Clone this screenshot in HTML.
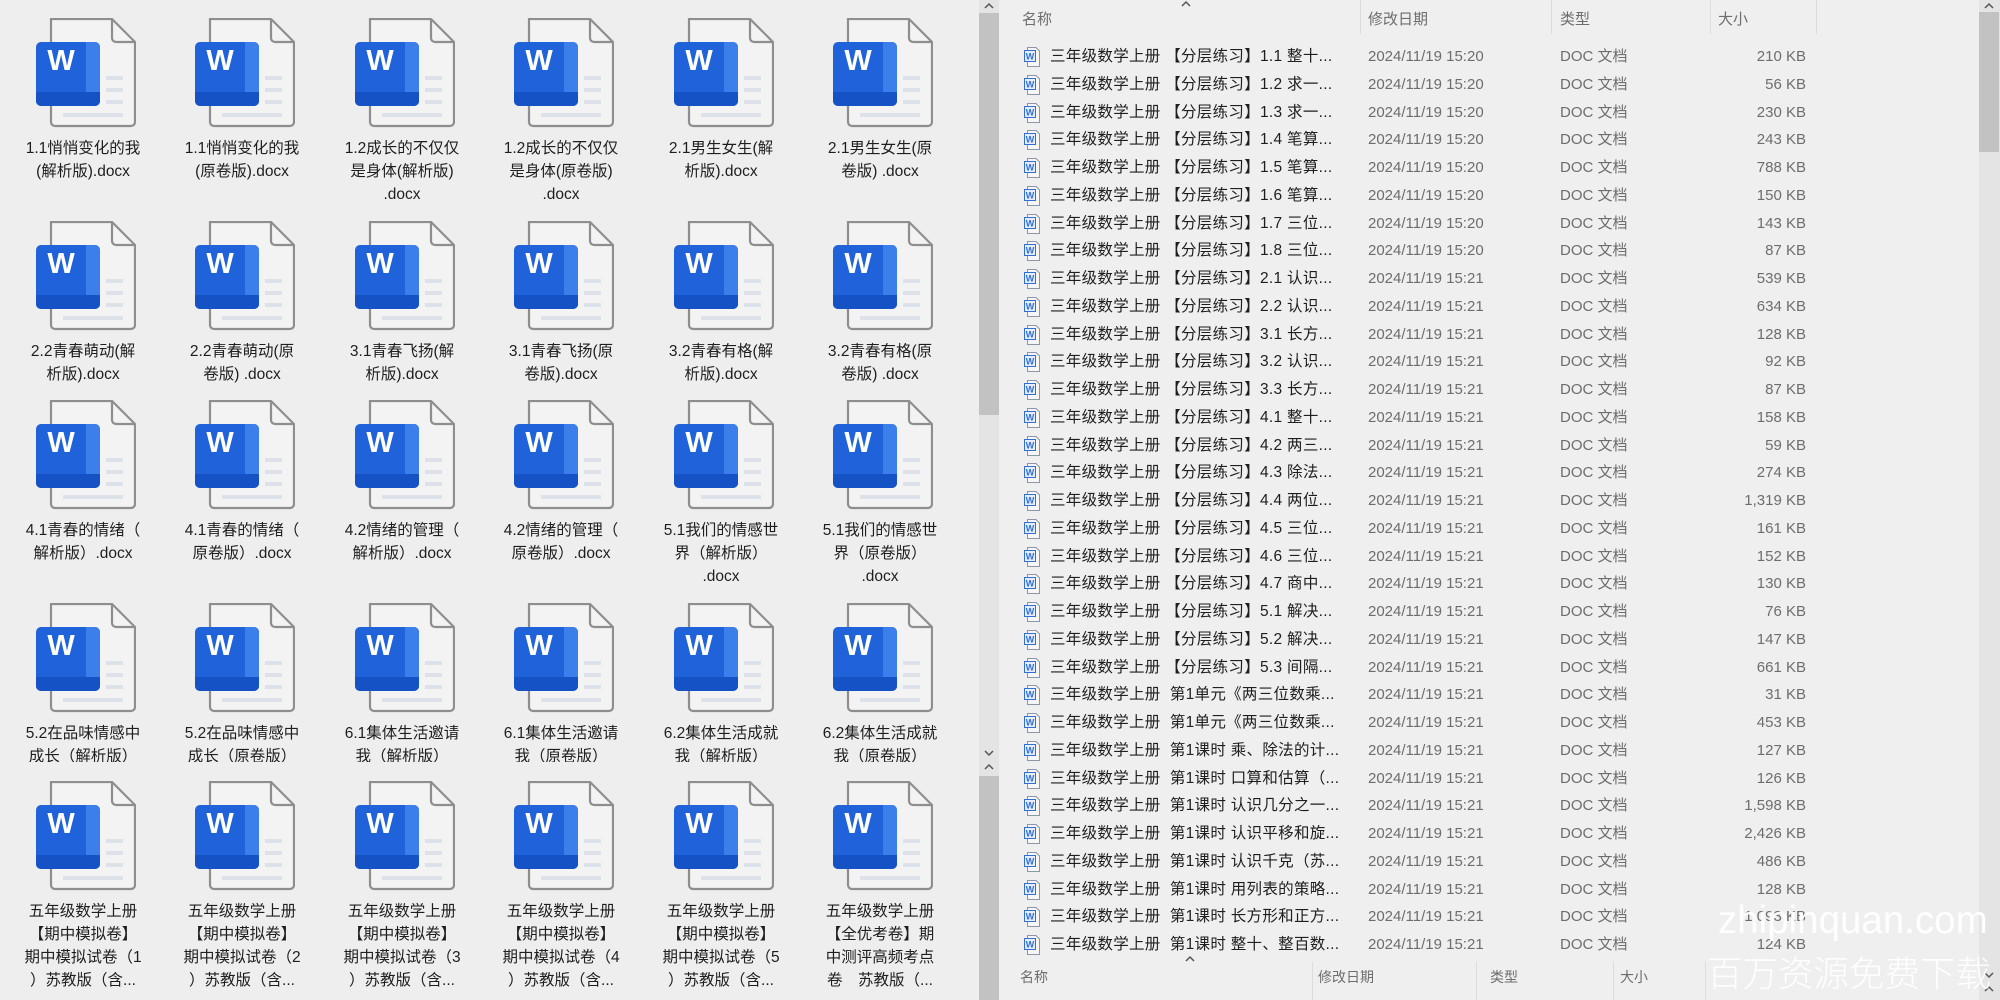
<!DOCTYPE html>
<html><head><meta charset="utf-8">
<style>
*{margin:0;padding:0;box-sizing:border-box}
body{width:2000px;height:1000px;overflow:hidden;background:#eeeeee;font-family:"Liberation Sans","Noto Sans CJK SC",sans-serif;position:relative}
.ic{position:absolute;width:100px;height:110px}
.lb{position:absolute;width:160px;text-align:center;font-size:15.5px;line-height:23px;color:#1e1e1e;white-space:nowrap;overflow:hidden}
.sb{position:absolute;background:#e4e4e4}
.th{position:absolute;background:#c2c2c2}
.cv{position:absolute;width:20px;height:10px}
#rp{position:absolute;left:1000px;top:0;width:979px;height:1000px;background:#efefef}
.hd{position:absolute;top:8px;font-size:15px;color:#6d6d6d}
.sep{position:absolute;width:1px;background:#dcdcdc}
.row{position:absolute;left:0;height:28px;width:830px;font-size:15px;line-height:28px}
.row svg{position:absolute;left:24px;top:4px}
.n{position:absolute;left:50px;color:#1e1e1e;white-space:nowrap;font-size:15.5px;letter-spacing:0.3px}
.d{position:absolute;left:368px;color:#6d6d6d}
.t{position:absolute;left:560px;color:#6d6d6d}
.s{position:absolute;right:24px;color:#6d6d6d}
.wm{position:absolute;color:#fff;opacity:.95;white-space:nowrap}
</style></head><body>
<svg width="0" height="0" style="position:absolute">
<defs>
<g id="doc">
<path d="M15 1H76L99 24V104a4 4 0 0 1-4 4H19a4 4 0 0 1-4-4Z" fill="#f3f3f3" stroke="#8e8e8e" stroke-width="2.2"/>
<path d="M76 1V20a4 4 0 0 0 4 4H99" fill="none" stroke="#8e8e8e" stroke-width="2.2"/>
<rect x="70" y="58" width="17" height="4" fill="#dde2ea"/>
<rect x="70" y="70" width="17" height="4" fill="#dde2ea"/>
<rect x="70" y="82" width="17" height="4" fill="#dde2ea"/>
<rect x="27" y="95" width="60" height="4" fill="#dde2ea"/>
<rect x="0" y="24" width="64" height="64" rx="5" fill="#1f62d9"/>
<path d="M50 24h9a5 5 0 0 1 5 5v54a5 5 0 0 1-5 5h-9Z" fill="#3c7eea"/>
<path d="M0 74h64v9a5 5 0 0 1-5 5H5a5 5 0 0 1-5-5Z" fill="#1552c6"/>
<text x="25" y="52" font-family="Liberation Sans" font-weight="bold" font-size="29" fill="#fff" text-anchor="middle">W</text>
</g>
<g id="sd">
<path d="M3.5 .5H12L15.5 4V19.5H3.5Z" fill="#f6f6f6" stroke="#8c96a8"/>
<rect x=".5" y="3.5" width="11" height="11" fill="#e6eefb" stroke="#2f6fd6" stroke-width="1"/>
<text x="6" y="12.5" font-family="Liberation Sans" font-size="9" font-weight="bold" fill="#2f6fd6" text-anchor="middle">W</text>
</g>
<path id="up" d="M6 7L10 3L14 7" fill="none" stroke="#555" stroke-width="1.5"/>
<path id="dn" d="M6 3L10 7L14 3" fill="none" stroke="#555" stroke-width="1.5"/>
</defs></svg>

<svg class="ic" style="left:36px;top:18px" viewBox="0 0 100 110"><use href="#doc"/></svg>
<svg class="ic" style="left:195px;top:18px" viewBox="0 0 100 110"><use href="#doc"/></svg>
<svg class="ic" style="left:355px;top:18px" viewBox="0 0 100 110"><use href="#doc"/></svg>
<svg class="ic" style="left:514px;top:18px" viewBox="0 0 100 110"><use href="#doc"/></svg>
<svg class="ic" style="left:674px;top:18px" viewBox="0 0 100 110"><use href="#doc"/></svg>
<svg class="ic" style="left:833px;top:18px" viewBox="0 0 100 110"><use href="#doc"/></svg>

<svg class="ic" style="left:36px;top:221px" viewBox="0 0 100 110"><use href="#doc"/></svg>
<svg class="ic" style="left:195px;top:221px" viewBox="0 0 100 110"><use href="#doc"/></svg>
<svg class="ic" style="left:355px;top:221px" viewBox="0 0 100 110"><use href="#doc"/></svg>
<svg class="ic" style="left:514px;top:221px" viewBox="0 0 100 110"><use href="#doc"/></svg>
<svg class="ic" style="left:674px;top:221px" viewBox="0 0 100 110"><use href="#doc"/></svg>
<svg class="ic" style="left:833px;top:221px" viewBox="0 0 100 110"><use href="#doc"/></svg>

<svg class="ic" style="left:36px;top:400px" viewBox="0 0 100 110"><use href="#doc"/></svg>
<svg class="ic" style="left:195px;top:400px" viewBox="0 0 100 110"><use href="#doc"/></svg>
<svg class="ic" style="left:355px;top:400px" viewBox="0 0 100 110"><use href="#doc"/></svg>
<svg class="ic" style="left:514px;top:400px" viewBox="0 0 100 110"><use href="#doc"/></svg>
<svg class="ic" style="left:674px;top:400px" viewBox="0 0 100 110"><use href="#doc"/></svg>
<svg class="ic" style="left:833px;top:400px" viewBox="0 0 100 110"><use href="#doc"/></svg>

<svg class="ic" style="left:36px;top:603px" viewBox="0 0 100 110"><use href="#doc"/></svg>
<svg class="ic" style="left:195px;top:603px" viewBox="0 0 100 110"><use href="#doc"/></svg>
<svg class="ic" style="left:355px;top:603px" viewBox="0 0 100 110"><use href="#doc"/></svg>
<svg class="ic" style="left:514px;top:603px" viewBox="0 0 100 110"><use href="#doc"/></svg>
<svg class="ic" style="left:674px;top:603px" viewBox="0 0 100 110"><use href="#doc"/></svg>
<svg class="ic" style="left:833px;top:603px" viewBox="0 0 100 110"><use href="#doc"/></svg>

<svg class="ic" style="left:36px;top:781px" viewBox="0 0 100 110"><use href="#doc"/></svg>
<svg class="ic" style="left:195px;top:781px" viewBox="0 0 100 110"><use href="#doc"/></svg>
<svg class="ic" style="left:355px;top:781px" viewBox="0 0 100 110"><use href="#doc"/></svg>
<svg class="ic" style="left:514px;top:781px" viewBox="0 0 100 110"><use href="#doc"/></svg>
<svg class="ic" style="left:674px;top:781px" viewBox="0 0 100 110"><use href="#doc"/></svg>
<svg class="ic" style="left:833px;top:781px" viewBox="0 0 100 110"><use href="#doc"/></svg>

<div class="lb" style="left:3px;top:137px">1.1悄悄变化的我<br>(解析版).docx</div>
<div class="lb" style="left:162px;top:137px">1.1悄悄变化的我<br>(原卷版).docx</div>
<div class="lb" style="left:322px;top:137px">1.2成长的不仅仅<br>是身体(解析版)<br>.docx</div>
<div class="lb" style="left:481px;top:137px">1.2成长的不仅仅<br>是身体(原卷版)<br>.docx</div>
<div class="lb" style="left:641px;top:137px">2.1男生女生(解<br>析版).docx</div>
<div class="lb" style="left:800px;top:137px">2.1男生女生(原<br>卷版) .docx</div>

<div class="lb" style="left:3px;top:340px">2.2青春萌动(解<br>析版).docx</div>
<div class="lb" style="left:162px;top:340px">2.2青春萌动(原<br>卷版) .docx</div>
<div class="lb" style="left:322px;top:340px">3.1青春飞扬(解<br>析版).docx</div>
<div class="lb" style="left:481px;top:340px">3.1青春飞扬(原<br>卷版).docx</div>
<div class="lb" style="left:641px;top:340px">3.2青春有格(解<br>析版).docx</div>
<div class="lb" style="left:800px;top:340px">3.2青春有格(原<br>卷版) .docx</div>

<div class="lb" style="left:3px;top:519px">4.1青春的情绪（<br>解析版）.docx</div>
<div class="lb" style="left:162px;top:519px">4.1青春的情绪（<br>原卷版）.docx</div>
<div class="lb" style="left:322px;top:519px">4.2情绪的管理（<br>解析版）.docx</div>
<div class="lb" style="left:481px;top:519px">4.2情绪的管理（<br>原卷版）.docx</div>
<div class="lb" style="left:641px;top:519px">5.1我们的情感世<br>界（解析版）<br>.docx</div>
<div class="lb" style="left:800px;top:519px">5.1我们的情感世<br>界（原卷版）<br>.docx</div>

<div class="lb" style="left:3px;top:722px;height:40px">5.2在品味情感中<br>成长（解析版）</div>
<div class="lb" style="left:162px;top:722px;height:40px">5.2在品味情感中<br>成长（原卷版）</div>
<div class="lb" style="left:322px;top:722px;height:40px">6.1集体生活邀请<br>我（解析版）</div>
<div class="lb" style="left:481px;top:722px;height:40px">6.1集体生活邀请<br>我（原卷版）</div>
<div class="lb" style="left:641px;top:722px;height:40px">6.2集体生活成就<br>我（解析版）</div>
<div class="lb" style="left:800px;top:722px;height:40px">6.2集体生活成就<br>我（原卷版）</div>

<div class="lb" style="left:3px;top:900px">五年级数学上册<br>【期中模拟卷】<br>期中模拟试卷（1<br>）苏教版（含...</div>
<div class="lb" style="left:162px;top:900px">五年级数学上册<br>【期中模拟卷】<br>期中模拟试卷（2<br>）苏教版（含...</div>
<div class="lb" style="left:322px;top:900px">五年级数学上册<br>【期中模拟卷】<br>期中模拟试卷（3<br>）苏教版（含...</div>
<div class="lb" style="left:481px;top:900px">五年级数学上册<br>【期中模拟卷】<br>期中模拟试卷（4<br>）苏教版（含...</div>
<div class="lb" style="left:641px;top:900px">五年级数学上册<br>【期中模拟卷】<br>期中模拟试卷（5<br>）苏教版（含...</div>
<div class="lb" style="left:800px;top:900px">五年级数学上册<br>【全优考卷】期<br>中测评高频考点<br>卷　苏教版（...</div>

<div class="sb" style="left:979px;top:0;width:20px;height:1000px"></div>
<div class="th" style="left:979px;top:13px;width:20px;height:402px"></div>
<div class="th" style="left:979px;top:776px;width:20px;height:224px"></div>
<svg class="cv" style="left:979px;top:1px"><use href="#up"/></svg>
<svg class="cv" style="left:979px;top:748px"><use href="#dn"/></svg>
<svg class="cv" style="left:979px;top:762px"><use href="#up"/></svg>

<div id="rp">
<div class="hd" style="left:22px">名称</div>
<svg class="cv" style="left:176px;top:-1px"><use href="#up"/></svg>
<div class="hd" style="left:368px">修改日期</div>
<div class="hd" style="left:560px">类型</div>
<div class="hd" style="left:718px">大小</div>
<div class="sep" style="left:360px;top:0;height:34px"></div>
<div class="sep" style="left:551px;top:0;height:34px"></div>
<div class="sep" style="left:710px;top:0;height:34px"></div>
<div class="sep" style="left:816px;top:0;height:34px"></div>

<div class="row" style="top:43px"><svg width="16" height="20"><use href="#sd"/></svg><span class="n">三年级数学上册 【分层练习】1.1 整十...</span><span class="d">2024/11/19 15:20</span><span class="t">DOC 文档</span><span class="s">210 KB</span></div>
<div class="row" style="top:70.75px"><svg width="16" height="20"><use href="#sd"/></svg><span class="n">三年级数学上册 【分层练习】1.2 求一...</span><span class="d">2024/11/19 15:20</span><span class="t">DOC 文档</span><span class="s">56 KB</span></div>
<div class="row" style="top:98.5px"><svg width="16" height="20"><use href="#sd"/></svg><span class="n">三年级数学上册 【分层练习】1.3 求一...</span><span class="d">2024/11/19 15:20</span><span class="t">DOC 文档</span><span class="s">230 KB</span></div>
<div class="row" style="top:126.25px"><svg width="16" height="20"><use href="#sd"/></svg><span class="n">三年级数学上册 【分层练习】1.4 笔算...</span><span class="d">2024/11/19 15:20</span><span class="t">DOC 文档</span><span class="s">243 KB</span></div>
<div class="row" style="top:154px"><svg width="16" height="20"><use href="#sd"/></svg><span class="n">三年级数学上册 【分层练习】1.5 笔算...</span><span class="d">2024/11/19 15:20</span><span class="t">DOC 文档</span><span class="s">788 KB</span></div>
<div class="row" style="top:181.75px"><svg width="16" height="20"><use href="#sd"/></svg><span class="n">三年级数学上册 【分层练习】1.6 笔算...</span><span class="d">2024/11/19 15:20</span><span class="t">DOC 文档</span><span class="s">150 KB</span></div>
<div class="row" style="top:209.5px"><svg width="16" height="20"><use href="#sd"/></svg><span class="n">三年级数学上册 【分层练习】1.7 三位...</span><span class="d">2024/11/19 15:20</span><span class="t">DOC 文档</span><span class="s">143 KB</span></div>
<div class="row" style="top:237.25px"><svg width="16" height="20"><use href="#sd"/></svg><span class="n">三年级数学上册 【分层练习】1.8 三位...</span><span class="d">2024/11/19 15:20</span><span class="t">DOC 文档</span><span class="s">87 KB</span></div>
<div class="row" style="top:265px"><svg width="16" height="20"><use href="#sd"/></svg><span class="n">三年级数学上册 【分层练习】2.1 认识...</span><span class="d">2024/11/19 15:21</span><span class="t">DOC 文档</span><span class="s">539 KB</span></div>
<div class="row" style="top:292.75px"><svg width="16" height="20"><use href="#sd"/></svg><span class="n">三年级数学上册 【分层练习】2.2 认识...</span><span class="d">2024/11/19 15:21</span><span class="t">DOC 文档</span><span class="s">634 KB</span></div>
<div class="row" style="top:320.5px"><svg width="16" height="20"><use href="#sd"/></svg><span class="n">三年级数学上册 【分层练习】3.1 长方...</span><span class="d">2024/11/19 15:21</span><span class="t">DOC 文档</span><span class="s">128 KB</span></div>
<div class="row" style="top:348.25px"><svg width="16" height="20"><use href="#sd"/></svg><span class="n">三年级数学上册 【分层练习】3.2 认识...</span><span class="d">2024/11/19 15:21</span><span class="t">DOC 文档</span><span class="s">92 KB</span></div>
<div class="row" style="top:376px"><svg width="16" height="20"><use href="#sd"/></svg><span class="n">三年级数学上册 【分层练习】3.3 长方...</span><span class="d">2024/11/19 15:21</span><span class="t">DOC 文档</span><span class="s">87 KB</span></div>
<div class="row" style="top:403.75px"><svg width="16" height="20"><use href="#sd"/></svg><span class="n">三年级数学上册 【分层练习】4.1 整十...</span><span class="d">2024/11/19 15:21</span><span class="t">DOC 文档</span><span class="s">158 KB</span></div>
<div class="row" style="top:431.5px"><svg width="16" height="20"><use href="#sd"/></svg><span class="n">三年级数学上册 【分层练习】4.2 两三...</span><span class="d">2024/11/19 15:21</span><span class="t">DOC 文档</span><span class="s">59 KB</span></div>
<div class="row" style="top:459.25px"><svg width="16" height="20"><use href="#sd"/></svg><span class="n">三年级数学上册 【分层练习】4.3 除法...</span><span class="d">2024/11/19 15:21</span><span class="t">DOC 文档</span><span class="s">274 KB</span></div>
<div class="row" style="top:487px"><svg width="16" height="20"><use href="#sd"/></svg><span class="n">三年级数学上册 【分层练习】4.4 两位...</span><span class="d">2024/11/19 15:21</span><span class="t">DOC 文档</span><span class="s">1,319 KB</span></div>
<div class="row" style="top:514.75px"><svg width="16" height="20"><use href="#sd"/></svg><span class="n">三年级数学上册 【分层练习】4.5 三位...</span><span class="d">2024/11/19 15:21</span><span class="t">DOC 文档</span><span class="s">161 KB</span></div>
<div class="row" style="top:542.5px"><svg width="16" height="20"><use href="#sd"/></svg><span class="n">三年级数学上册 【分层练习】4.6 三位...</span><span class="d">2024/11/19 15:21</span><span class="t">DOC 文档</span><span class="s">152 KB</span></div>
<div class="row" style="top:570.25px"><svg width="16" height="20"><use href="#sd"/></svg><span class="n">三年级数学上册 【分层练习】4.7 商中...</span><span class="d">2024/11/19 15:21</span><span class="t">DOC 文档</span><span class="s">130 KB</span></div>
<div class="row" style="top:598px"><svg width="16" height="20"><use href="#sd"/></svg><span class="n">三年级数学上册 【分层练习】5.1 解决...</span><span class="d">2024/11/19 15:21</span><span class="t">DOC 文档</span><span class="s">76 KB</span></div>
<div class="row" style="top:625.75px"><svg width="16" height="20"><use href="#sd"/></svg><span class="n">三年级数学上册 【分层练习】5.2 解决...</span><span class="d">2024/11/19 15:21</span><span class="t">DOC 文档</span><span class="s">147 KB</span></div>
<div class="row" style="top:653.5px"><svg width="16" height="20"><use href="#sd"/></svg><span class="n">三年级数学上册 【分层练习】5.3 间隔...</span><span class="d">2024/11/19 15:21</span><span class="t">DOC 文档</span><span class="s">661 KB</span></div>
<div class="row" style="top:681.25px"><svg width="16" height="20"><use href="#sd"/></svg><span class="n">三年级数学上册&nbsp; 第1单元《两三位数乘...</span><span class="d">2024/11/19 15:21</span><span class="t">DOC 文档</span><span class="s">31 KB</span></div>
<div class="row" style="top:709px"><svg width="16" height="20"><use href="#sd"/></svg><span class="n">三年级数学上册&nbsp; 第1单元《两三位数乘...</span><span class="d">2024/11/19 15:21</span><span class="t">DOC 文档</span><span class="s">453 KB</span></div>
<div class="row" style="top:736.75px"><svg width="16" height="20"><use href="#sd"/></svg><span class="n">三年级数学上册&nbsp; 第1课时 乘、除法的计...</span><span class="d">2024/11/19 15:21</span><span class="t">DOC 文档</span><span class="s">127 KB</span></div>
<div class="row" style="top:764.5px"><svg width="16" height="20"><use href="#sd"/></svg><span class="n">三年级数学上册&nbsp; 第1课时 口算和估算（...</span><span class="d">2024/11/19 15:21</span><span class="t">DOC 文档</span><span class="s">126 KB</span></div>
<div class="row" style="top:792.25px"><svg width="16" height="20"><use href="#sd"/></svg><span class="n">三年级数学上册&nbsp; 第1课时 认识几分之一...</span><span class="d">2024/11/19 15:21</span><span class="t">DOC 文档</span><span class="s">1,598 KB</span></div>
<div class="row" style="top:820px"><svg width="16" height="20"><use href="#sd"/></svg><span class="n">三年级数学上册&nbsp; 第1课时 认识平移和旋...</span><span class="d">2024/11/19 15:21</span><span class="t">DOC 文档</span><span class="s">2,426 KB</span></div>
<div class="row" style="top:847.75px"><svg width="16" height="20"><use href="#sd"/></svg><span class="n">三年级数学上册&nbsp; 第1课时 认识千克（苏...</span><span class="d">2024/11/19 15:21</span><span class="t">DOC 文档</span><span class="s">486 KB</span></div>
<div class="row" style="top:875.5px"><svg width="16" height="20"><use href="#sd"/></svg><span class="n">三年级数学上册&nbsp; 第1课时 用列表的策略...</span><span class="d">2024/11/19 15:21</span><span class="t">DOC 文档</span><span class="s">128 KB</span></div>
<div class="row" style="top:903.25px"><svg width="16" height="20"><use href="#sd"/></svg><span class="n">三年级数学上册&nbsp; 第1课时 长方形和正方...</span><span class="d">2024/11/19 15:21</span><span class="t">DOC 文档</span><span class="s">1,093 KB</span></div>
<div class="row" style="top:931px"><svg width="16" height="20"><use href="#sd"/></svg><span class="n">三年级数学上册&nbsp; 第1课时 整十、整百数...</span><span class="d">2024/11/19 15:21</span><span class="t">DOC 文档</span><span class="s">124 KB</span></div>

<svg class="cv" style="left:180px;top:954px"><use href="#up"/></svg>
<div class="hd" style="left:20px;top:967px;font-size:14px">名称</div>
<div class="hd" style="left:318px;top:967px;font-size:14px">修改日期</div>
<div class="hd" style="left:490px;top:967px;font-size:14px">类型</div>
<div class="hd" style="left:620px;top:967px;font-size:14px">大小</div>
<div class="sep" style="left:312px;top:962px;height:38px"></div>
<div class="sep" style="left:476px;top:962px;height:38px"></div>
<div class="sep" style="left:613px;top:962px;height:38px"></div>
<div class="sep" style="left:705px;top:962px;height:38px"></div>
</div>

<div class="sb" style="left:1979px;top:0;width:21px;height:1000px"></div>
<div class="th" style="left:1979px;top:12px;width:20px;height:140px"></div>
<svg class="cv" style="left:1979px;top:1px"><use href="#up"/></svg>
<svg class="cv" style="left:1979px;top:970px"><use href="#dn"/></svg>
<svg class="cv" style="left:1979px;top:984px"><use href="#up"/></svg>

<div class="wm" style="left:1718px;top:898px;font-size:38.5px;line-height:46px;font-family:'Liberation Sans',sans-serif">zhipinquan.com</div>
<div class="wm" style="left:1707px;top:950px;font-size:35.5px;line-height:44px;font-family:'Noto Sans CJK SC',sans-serif;font-weight:300">百万资源免费下载</div>
</body></html>
